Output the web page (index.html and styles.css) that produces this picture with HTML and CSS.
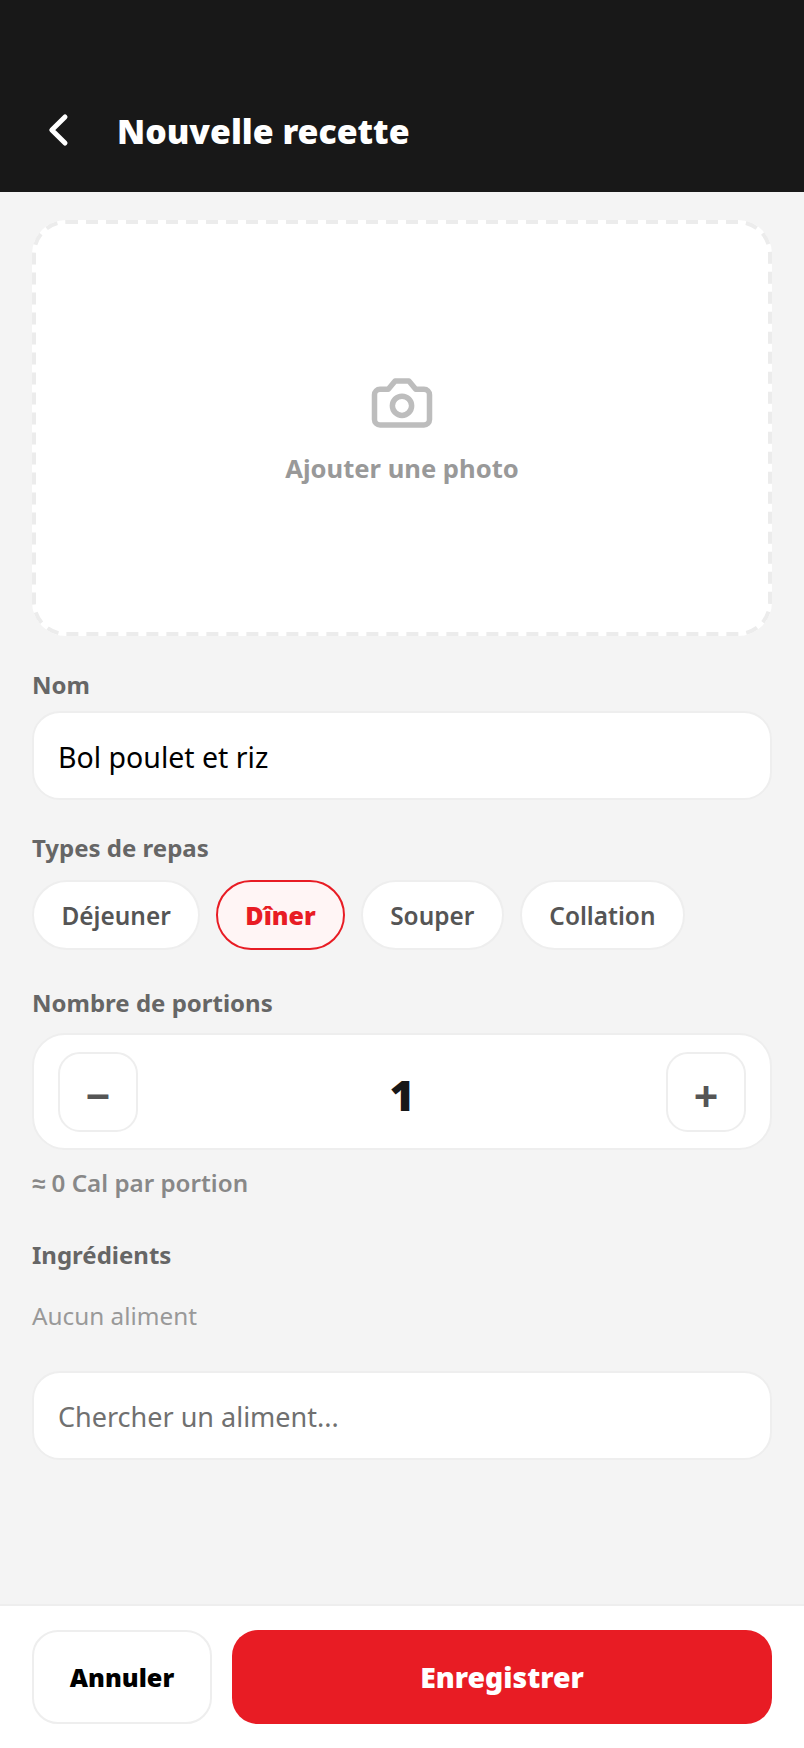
FILE: index.html

```html
<!DOCTYPE html>
<html lang="fr">
<head>
  <meta charset="UTF-8" />
  <meta name="viewport" content="width=device-width, initial-scale=1.0"/>
  <title>Nouvelle recette</title>
  <link rel="stylesheet" href="styles.css">
</head>
<body>
  <header class="topbar">
    <button class="back" aria-label="Retour">
      <svg width="22" height="34" viewBox="0 0 22 34" fill="none" stroke="#fff" stroke-width="5" stroke-linecap="round" stroke-linejoin="round">
        <path d="M17 4 L3.8 17 L17 30"/>
      </svg>
    </button>
    <h1>Nouvelle recette</h1>
  </header>

  <main class="content">
    <div class="photo">
      <!-- dashed outline: a css border can't get this dash length -->
      <svg class="photo-outline" width="740" height="416" fill="none" stroke="#ececec" stroke-width="4" stroke-dasharray="12 8">
        <rect x="2" y="2" width="736" height="412" rx="32"/>
      </svg>
      <svg width="66" height="66" viewBox="0 0 24 24" fill="none" stroke="#bdbdbd" stroke-width="2" stroke-linecap="round" stroke-linejoin="round">
        <path d="M14.5 4h-5L7 7H4a2 2 0 0 0-2 2v9a2 2 0 0 0 2 2h16a2 2 0 0 0 2-2V9a2 2 0 0 0-2-2h-3l-2.5-3z"/>
        <circle cx="12" cy="13" r="3.5"/>
      </svg>
      <span>Ajouter une photo</span>
    </div>

    <label class="field-label" for="nom">Nom</label>
    <input class="text-input name" id="nom" type="text" value="Bol poulet et riz" />

    <div class="field-label">Types de repas</div>
    <div class="chips">
      <button class="chip">Déjeuner</button>
      <button class="chip active">Dîner</button>
      <button class="chip">Souper</button>
      <button class="chip">Collation</button>
    </div>

    <div class="field-label">Nombre de portions</div>
    <div class="stepper">
      <button class="step">−</button>
      <span class="count">1</span>
      <button class="step">+</button>
    </div>
    <p class="per-portion">≈ 0 Cal par portion</p>

    <div class="field-label ingredients">Ingrédients</div>
    <p class="empty">Aucun aliment</p>
    <input class="text-input" type="text" placeholder="Chercher un aliment..." />
  </main>

  <footer class="actions">
    <button class="btn cancel">Annuler</button>
    <button class="btn save">Enregistrer</button>
  </footer>
</body>
</html>
```

FILE: styles.css

```css
* {
  box-sizing: border-box;
}

body {
  margin: 0;
  min-height: 100vh;
  display: flex;
  flex-direction: column;
  background-color: #f4f4f4;
  color: #181818;
  font-family: 'Noto Sans', sans-serif;
}

button,
input {
  font-family: inherit;
}

.topbar {
  height: 192px;
  padding: 0 32px 0 48px;
  display: flex;
  align-items: flex-end;
  background-color: #181818;
  color: #fff;
}

.back {
  width: 22px;
  height: 34px;
  margin-bottom: 45px;
  padding: 0;
  border: none;
  background: none;
}

.back svg {
  display: block;
}

h1 {
  margin: 0 0 35px 47px;
  font-size: 33.8px;
  line-height: 52px;
  font-weight: 900;
}

.content {
  flex: 1;
  padding: 28px 32px 0;
}

.photo {
  position: relative;
  height: 416px;
  margin-bottom: 32px;
  display: flex;
  flex-direction: column;
  align-items: center;
  justify-content: center;
  gap: 15px;
  background-color: #fff;
  border-radius: 34px;
  color: #999;
  font-size: 25.6px;
  font-weight: 700;
}

.photo-outline {
  position: absolute;
  top: 0;
  left: 0;
}

.field-label {
  display: block;
  margin: 31px 0 10px;
  color: #666;
  font-size: 24px;
  line-height: 33px;
  font-weight: 700;
}

.text-input {
  display: block;
  width: 100%;
  height: 89px;
  padding: 2px 24px 0;
  background-color: #fff;
  border: 2px solid #eee;
  border-radius: 28px;
  color: #000;
  font-size: 27px;
  outline: none;
}

.text-input.name {
  font-size: 28.5px;
}

.text-input::placeholder {
  color: #707070;
  opacity: 1;
}

.chips {
  display: flex;
  gap: 16px;
  margin: 16px 0 36px;
}

.chip {
  height: 70px;
  padding: 0 27.5px;
  background-color: #fff;
  border: 2px solid #eee;
  border-radius: 35px;
  color: #555;
  font-size: 24.4px;
  font-weight: 600;
}

.chip.active {
  padding: 0 27px;
  background-color: #fff5f5;
  border-color: #e81c24;
  color: #e81c24;
  font-size: 25px;
  font-weight: 900;
}

.stepper {
  height: 117px;
  margin-top: 14px;
  padding: 0 24px;
  display: flex;
  align-items: center;
  justify-content: space-between;
  background-color: #fff;
  border: 2px solid #eee;
  border-radius: 33px;
}

.step {
  width: 80px;
  height: 80px;
  padding: 8px 0 0;
  background-color: #fff;
  border: 2px solid #eee;
  border-radius: 22px;
  color: #555;
  font-size: 43px;
  line-height: 1;
  font-weight: 700;
}

.count {
  padding-top: 6px;
  font-size: 43px;
  font-weight: 900;
}

.per-portion {
  margin: 16px 0 0;
  color: #888;
  font-size: 24.2px;
  line-height: 33px;
  font-weight: 600;
}

.ingredients {
  margin-top: 39px;
}

.empty {
  margin: 28px 0 39px;
  color: #999;
  font-size: 24.3px;
  line-height: 33px;
}

.actions {
  display: flex;
  gap: 20px;
  padding: 24px 32px;
  background-color: #fff;
  border-top: 2px solid #eee;
}

.btn {
  height: 94px;
  border-radius: 26px;
  font-weight: 900;
}

.cancel {
  width: 180px;
  background-color: #fff;
  border: 2px solid #eee;
  color: #000;
  font-size: 25.2px;
}

.save {
  flex: 1;
  background-color: #e81c24;
  border: none;
  color: #fff;
  font-size: 28.4px;
}
```
